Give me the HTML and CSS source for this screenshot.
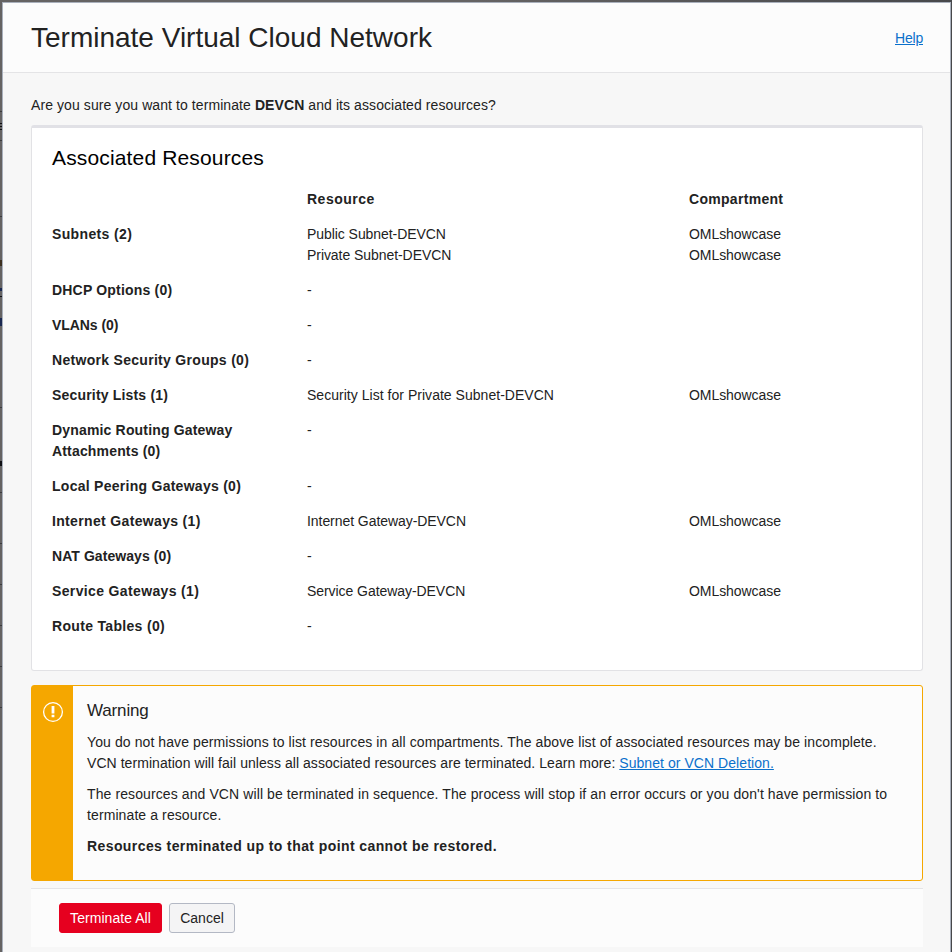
FILE: index.html
```html
<!DOCTYPE html>
<html lang="en">
<head>
<meta charset="utf-8">
<title>Terminate Virtual Cloud Network</title>
<link rel="stylesheet" href="styles.css">
</head>
<body>
<div class="backdrop" aria-hidden="true">
  <i class="rule r1"></i><i class="rule r2"></i><i class="rule r3"></i><i class="rule r4"></i><i class="rule r5"></i><i class="rule r6"></i><i class="rule r7"></i><i class="rule r8"></i><i class="rule r9"></i><i class="rule r10"></i>
  <i class="mark m1"></i><i class="mark m2"></i><i class="mark m3"></i><i class="mark m4"></i><i class="mark m5"></i>
</div>
<main class="dialog">
  <header class="dialog-header">
    <h1>Terminate Virtual Cloud Network</h1>
    <a class="help" href="#">Help</a>
  </header>
  <div class="dialog-body">
    <p class="question">Are you sure you want to terminate <b>DEVCN</b> and its associated resources?</p>
    <section class="card">
      <h2>Associated Resources</h2>
      <div class="resources">
        <span></span><b class="t-res">Resource</b><b class="t-comp">Compartment</b>
        <b class="t1">Subnets (2)</b><span>Public Subnet-DEVCN<br>Private Subnet-DEVCN</span><span>OMLshowcase<br>OMLshowcase</span>
        <b class="t2">DHCP Options (0)</b><span>-</span><span></span>
        <b class="t3">VLANs (0)</b><span>-</span><span></span>
        <b class="t4">Network Security Groups (0)</b><span>-</span><span></span>
        <b class="t5">Security Lists (1)</b><span class="list-name">Security List for Private Subnet-DEVCN</span><span>OMLshowcase</span>
        <b class="t6">Dynamic Routing Gateway<br>Attachments (0)</b><span>-</span><span></span>
        <b class="t7">Local Peering Gateways (0)</b><span>-</span><span></span>
        <b class="t8">Internet Gateways (1)</b><span>Internet Gateway-DEVCN</span><span>OMLshowcase</span>
        <b class="t9">NAT Gateways (0)</b><span>-</span><span></span>
        <b class="t10">Service Gateways (1)</b><span>Service Gateway-DEVCN</span><span>OMLshowcase</span>
        <b class="t11">Route Tables (0)</b><span>-</span><span></span>
      </div>
    </section>
    <section class="warning">
      <div class="warning-side">
        <svg width="22" height="22" viewBox="0 0 22 22" fill="none" stroke="#fff"><circle cx="11" cy="11" r="9.4" stroke-width="1.3"/><path d="M11 5v7.6M11 13.8v2.4" stroke-width="2.8"/></svg>
      </div>
      <div class="warning-text">
        <h3>Warning</h3>
        <p><span class="w1">You do not have permissions to list resources in all compartments. The above list of associated resources may be incomplete.</span><br><span class="w2">VCN termination will fail unless all associated resources are terminated. Learn more: <a href="#">Subnet or VCN Deletion.</a></span></p>
        <p><span class="w3">The resources and VCN will be terminated in sequence. The process will stop if an error occurs or you don't have permission to</span><br><span class="w3">terminate a resource.</span></p>
        <p><b class="w5">Resources terminated up to that point cannot be restored.</b></p>
      </div>
    </section>
    <footer class="actions">
      <button class="btn danger">Terminate All</button>
      <button class="btn">Cancel</button>
    </footer>
  </div>
</main>
</body>
</html>
```
FILE: styles.css
```css
* { box-sizing: border-box; }
html, body { margin: 0; height: 100%; overflow: hidden; }
body {
  position: relative;
  padding: 2px 1px 0 2px;
  background: linear-gradient(90deg, #656363 0 50%, #47484b 100%);
  font: 14px/21px "Liberation Sans", Arial, sans-serif;
  color: #222;
}
h1, h2, h3, p { margin: 0; font-weight: 400; }
a { color: #0b70cb; text-decoration: underline; }
.dialog {
  position: relative;
  height: 950px;
  border: 1px solid #a9b0bc;
  border-bottom: 0;
  background: #f7f7f7;
}
.dialog-header {
  display: flex;
  justify-content: space-between;
  align-items: center;
  height: 70px;
  padding: 0 27px 0 28px;
  background: #fcfcfc;
  border-bottom: 1px solid #e4e4e6;
}
h1 { font-size: 28px; line-height: 36px; }
.help { line-height: 20px; letter-spacing: -.2px; }
.dialog-body { padding: 22px 27px 0 28px; }
.question { padding-bottom: 9px; letter-spacing: .083px; }
.card {
  height: 546px;
  padding: 18px 20px 0;
  background: #fff;
  border: 1px solid #e2e2e5;
  border-top: 3px solid #e1e1e6;
  border-radius: 3px;
}
h2 { font-size: 21px; line-height: 24px; color: #000; margin-bottom: 19px; letter-spacing: .15px; }
.resources {
  display: grid;
  grid-template-columns: 255px 382px 1fr;
  row-gap: 14px;
}
.resources span { letter-spacing: -.06px; }
.resources .list-name { letter-spacing: .03px; }
.t-res { letter-spacing: .5px; }
.t-comp { letter-spacing: .3px; }
.t1 { letter-spacing: .36px; }
.t2 { letter-spacing: .19px; }
.t3 { letter-spacing: -.06px; }
.t4 { letter-spacing: .3px; }
.t5 { letter-spacing: .18px; }
.t6 { letter-spacing: .17px; }
.t7 { letter-spacing: .27px; }
.t8 { letter-spacing: .34px; }
.t9 { letter-spacing: .07px; }
.t10 { letter-spacing: .36px; }
.t11 { letter-spacing: .32px; }
.w1 { letter-spacing: .093px; }
.w2 { letter-spacing: .055px; }
.w3 { letter-spacing: .1px; }
.w5 { letter-spacing: .41px; }
.warning {
  display: flex;
  height: 196px;
  margin-top: 14px;
  background: #fcfcfc;
  border: 1px solid #f5a700;
  border-radius: 3px;
}
.warning-side {
  width: 41px;
  padding: 15px 0 0 10px;
  background: #f5a700;
}
.warning-text { padding: 14px 0 0 14px; white-space: nowrap; }
h3 { font-size: 17px; line-height: 21px; margin-bottom: 11px; letter-spacing: -.15px; }
.warning-text p { margin-bottom: 10px; }
.actions {
  display: flex;
  gap: 7px;
  height: 59px;
  margin-top: 7px;
  padding: 14px 28px;
  background: #fcfcfc;
  border-top: 1px solid #e4e4e6;
}
.btn {
  height: 30px;
  width: 66px;
  padding: 0;
  font: inherit;
  color: #222;
  background: #f4f4f5;
  border: 1px solid #b3b8c4;
  border-radius: 3px;
}
.danger { width: 103px; color: #fff; background: #e6001f; border-color: #e6001f; letter-spacing: .05px; }

/* Slivers of the dimmed page behind the dialog */
.backdrop i { position: absolute; left: 0; width: 2px; height: 1px; background: #3c3c3e; }
.r1 { top: 111px; } .r2 { top: 140px; } .r3 { top: 216px; } .r4 { top: 407px; } .r5 { top: 492px; }
.r6 { top: 543px; } .r7 { top: 584px; } .r8 { top: 625px; } .r9 { top: 666px; } .r10 { top: 707px; }
.backdrop .mark { background: #101014; }
.backdrop .m1 { top: 123px; height: 8px; background: repeating-linear-gradient(#101014 0 1px, #656363 1px 3px); }
.backdrop .m2 { top: 260px; height: 6px; background: #3d3020; }
.backdrop .m3 { top: 288px; height: 9px; background: linear-gradient(#1a2850 0 3px, #656363 3px 8px, #101014 8px); }
.backdrop .m4 { top: 318px; height: 8px; background: #1a2850; }
.backdrop .m5 { top: 461px; height: 5px; }
```
